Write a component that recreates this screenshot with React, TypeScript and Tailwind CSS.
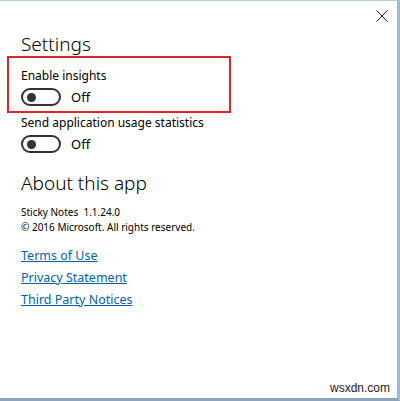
import React from 'react'

const font = { fontFamily: '"Noto Sans", "Open Sans", sans-serif' }

function Toggle() {
  return (
    <div className="w-[40px] h-[18px] rounded-full border-2 border-[#333] flex items-center pl-[4px] shrink-0">
      <div className="w-[9px] h-[9px] rounded-full bg-[#333]" />
    </div>
  )
}

function ToggleRow({ label }: { label: string }) {
  return (
    <div className="flex flex-col">
      <div className="text-[12px] leading-[16px] text-black">{label}</div>
      <div className="flex items-center gap-[10px] mt-[4px]">
        <Toggle />
        <span className="text-[13px] leading-[17px] text-black">Off</span>
      </div>
    </div>
  )
}

export default function App() {
  return (
    <div
      className="relative w-[400px] h-[401px] bg-white border-t border-t-[#b4cde8] border-r-[3px] border-r-[#9dbadb] border-b-[3px] border-b-[#8ca3bd] overflow-hidden"
      style={font}
    >
      <div className="flex justify-end pt-[8px] pr-[8px]">
        <button className="w-[14px] h-[14px] flex items-center justify-center">
          <svg width="12" height="12" viewBox="0 0 12 12">
            <path d="M0.5 0.5 L11.5 11.5 M11.5 0.5 L0.5 11.5" stroke="#222" strokeWidth="1" fill="none" />
          </svg>
        </button>
      </div>

      <div className="pl-[21px]">
        <h2 className="text-[19px] leading-[24px] font-light text-black mt-[9px]">Settings</h2>
      </div>

      <div className="ml-[7px] w-[224px] border-2 border-[#e0242c] pl-[12px] pt-[10px] pb-[5px]">
        <ToggleRow label="Enable insights" />
      </div>

      <div className="pl-[21px] mt-[2px]">
        <ToggleRow label="Send application usage statistics" />

        <h2 className="text-[19px] leading-[24px] font-light text-black mt-[18px]">About this app</h2>

        <div className="mt-[10px] text-[10px] leading-[15px] text-black">
          <div>Sticky Notes&nbsp; 1.1.24.0</div>
          <div>© 2016 Microsoft. All rights reserved.</div>
        </div>

        <div className="mt-[11px] flex flex-col gap-[3px] text-[12.5px] leading-[19px] text-[#0063b1]">
          <a className="underline self-start">Terms of Use</a>
          <a className="underline self-start">Privacy Statement</a>
          <a className="underline self-start">Third Party Notices</a>
        </div>
      </div>

      <div
        className="absolute right-[7px] bottom-[1px] text-[12px] text-[#222]"
        style={{ fontFamily: '"Liberation Sans", Arial, sans-serif' }}
      >
        wsxdn.com
      </div>
    </div>
  )
}
